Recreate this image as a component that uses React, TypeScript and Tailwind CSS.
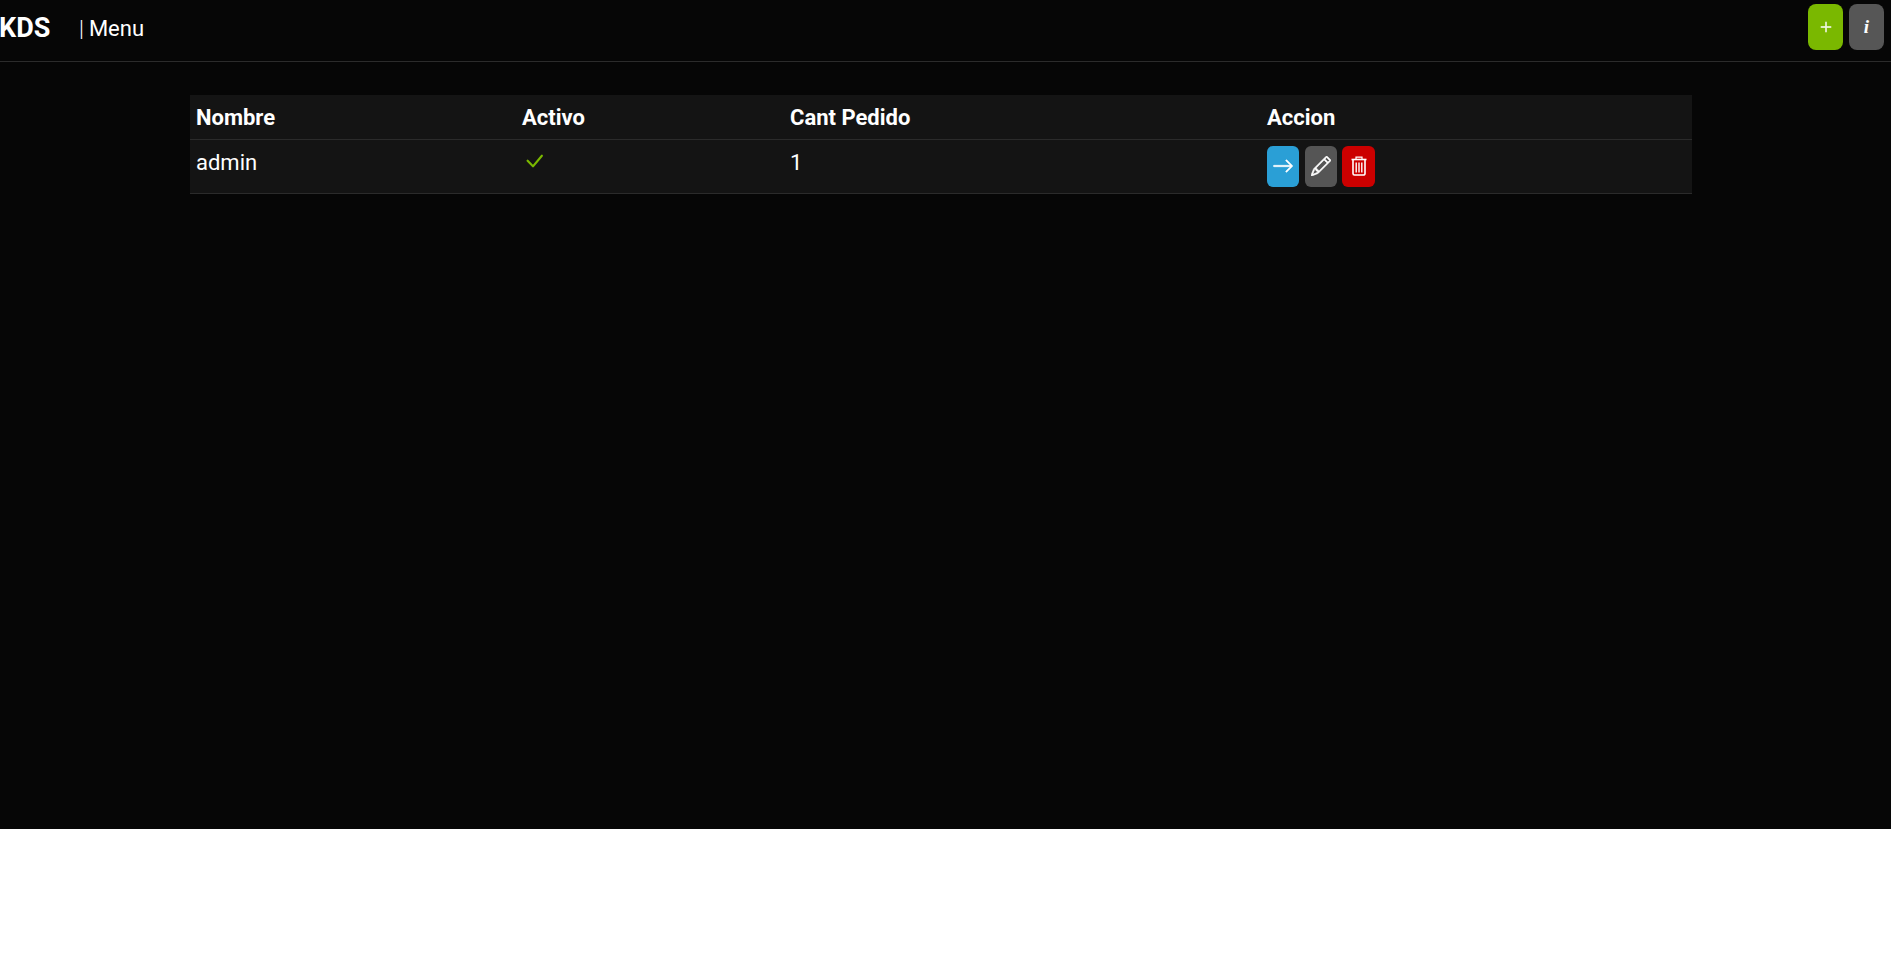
import { BsArrowRight, BsCheckLg, BsPencil, BsPlusLg } from "react-icons/bs";

function TrashIcon() {
  return (
    <svg width="16" height="20" viewBox="0 0 16 20" fill="none" stroke="currentColor">
      <path d="M0.5 3.5H15.5" strokeWidth="1.6" />
      <path d="M5 3V1.2H11V3" strokeWidth="1.2" />
      <path d="M2 4V17.5A1.5 1.5 0 0 0 3.5 19H12.5A1.5 1.5 0 0 0 14 17.5V4" strokeWidth="1.6" />
      <path d="M5.2 6.5V16.5M8 6.5V16.5M10.8 6.5V16.5" strokeWidth="1.4" />
    </svg>
  );
}

export default function App() {
  return (
    <div className="min-h-[959px] bg-white font-['Roboto',sans-serif] text-white">
      <div className="h-[829px] bg-[#060606]">
        <header className="flex h-[62px] items-start justify-between border-b border-[#2b2b2b]">
          <div className="flex items-start">
            <span className="-ml-[1px] w-[80px] text-[27px] font-bold leading-[56px]">KDS</span>
            <span className="pt-[1px] text-[22px] font-light leading-[56px]">|</span>
            <span className="ml-[5px] pt-[1px] text-[22px] leading-[56px]">Menu</span>
          </div>
          <div className="flex items-center gap-[6px] pr-[7px] pt-[4px]">
            <button className="flex h-[46px] w-[35px] items-center justify-center rounded-[8px] bg-[#7ab800]"><BsPlusLg size={14} stroke="currentColor" strokeWidth={0.6} /></button>
            <button className="flex h-[46px] w-[35px] items-center justify-center rounded-[8px] bg-[#565656] font-['Liberation_Serif',serif] text-[19px] font-bold italic">i</button>
          </div>
        </header>
        <div className="px-[190px] pt-[33px]">
          <table className="w-[1502px] table-fixed border-collapse bg-[#141414] text-[22px]">
            <colgroup>
              <col className="w-[326px]" />
              <col className="w-[268px]" />
              <col className="w-[477px]" />
              <col className="w-[431px]" />
            </colgroup>
            <thead>
              <tr className="h-[44px] border-b border-[#2b2b2b] text-left">
                <th className="px-[6px] pt-[2px] font-bold">Nombre</th>
                <th className="px-[6px] pt-[2px] font-bold">Activo</th>
                <th className="px-[6px] pt-[2px] font-bold">Cant Pedido</th>
                <th className="px-[6px] pt-[2px] font-bold">Accion</th>
              </tr>
            </thead>
            <tbody>
              <tr className="h-[54px] border-b border-[#2b2b2b]">
                <td className="px-[6px] pb-[7px]">admin</td>
                <td className="px-[6px] pb-[11px]"><BsCheckLg size={24} className="text-[#7ab800]" /></td>
                <td className="px-[6px] pb-[7px]">1</td>
                <td className="px-[6px]">
                  <div className="flex">
                    <button className="flex h-[41px] w-[32px] items-center justify-center rounded-[6px] bg-[#2a9fd6]"><BsArrowRight size={22} stroke="currentColor" strokeWidth={0.4} /></button>
                    <button className="ml-[6px] flex h-[41px] w-[32px] items-center justify-center rounded-[6px] bg-[#555555]"><BsPencil size={20} stroke="currentColor" strokeWidth={0.5} /></button>
                    <button className="ml-[5px] flex h-[41px] w-[33px] items-center justify-center rounded-[6px] bg-[#cc0000]"><TrashIcon /></button>
                  </div>
                </td>
              </tr>
            </tbody>
          </table>
        </div>
      </div>
    </div>
  );
}
